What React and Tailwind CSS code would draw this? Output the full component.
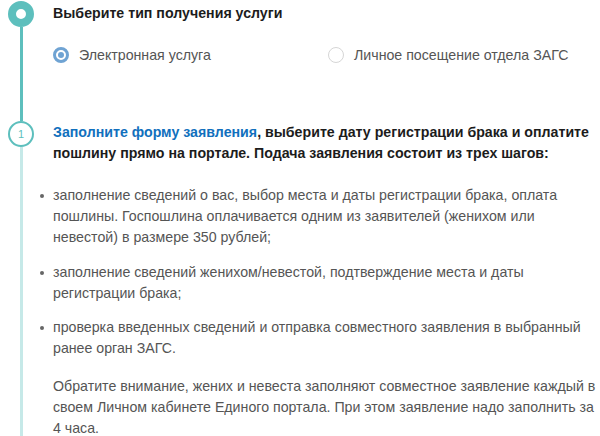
import React from 'react';

const items = [
    'заполнение сведений о вас, выбор места и даты регистрации брака, оплата пошлины. Госпошлина оплачивается одним из заявителей (женихом или невестой) в размере 350 рублей;',
    'заполнение сведений женихом/невестой, подтверждение места и даты регистрации брака;',
    'проверка введенных сведений и отправка совместного заявления в выбранный ранее орган ЗАГС.',
];

const Radio = ({ checked, label }) => (
    <label className="flex items-center gap-[10px] leading-[20px] text-[14.2px] text-[#555]">
        {checked ? (
            <span className="w-[16px] h-[16px] rounded-full border-[3px] border-[#6fa3d3] flex items-center justify-center">
                <span className="w-[6px] h-[6px] rounded-full bg-[#6fa3d3]" />
            </span>
        ) : (
            <span className="w-[16px] h-[16px] rounded-full border border-[#d6d6d6] bg-white" />
        )}
        {label}
    </label>
);

export default function App() {
    return (
        <div className="w-[600px] h-[436px] overflow-hidden bg-white" style={{ fontFamily: '"Liberation Sans", Arial, sans-serif' }}>
            {/* Step: type of service */}
            <div className="flex">
                <div className="w-[42px] flex flex-col items-center pt-[1px]">
                    <div className="w-[26px] h-[26px] rounded-full border-[8px] border-[#5dbfbd] shrink-0" />
                    <div className="flex-1 w-[3px] bg-[#5dbfbd]" />
                </div>
                <div className="flex-1 pl-[11px] pb-[56px]">
                    <h2 className="text-[14.2px] leading-[26px] font-bold text-[#1c1c1c]">
                        Выберите тип получения услуги
                    </h2>
                    <div className="mt-[19px] flex">
                        <div className="w-[275px]">
                            <Radio checked label="Электронная услуга" />
                        </div>
                        <Radio label="Личное посещение отдела ЗАГС" />
                    </div>
                </div>
            </div>

            {/* Step 1 */}
            <div className="flex">
                <div className="w-[42px] flex flex-col items-center">
                    <div className="w-[26px] h-[26px] rounded-full border-2 border-[#5dbfbd] flex items-center justify-center text-[11px] text-[#5dbfbd] shrink-0">
                        1
                    </div>
                    <div className="flex-1 w-[3px] bg-[#c6e9e8]" />
                </div>
                <div className="flex-1 pl-[11px] pr-[4px] pt-[1px] pb-[20px]">
                    <p className="text-[14.2px] leading-[21px] font-bold text-[#1c1c1c]">
                        <span className="text-[#1170bd]">Заполните форму заявления</span>, выберите дату регистрации брака и оплатите пошлину прямо на портале. Подача заявления состоит из трех шагов:
                    </p>
                    <ul className="mt-[21px] -ml-[16px] text-[14.2px] leading-[21px] text-[#555]">
                        {items.map((t, i) => (
                            <li key={i} className={i === 0 ? 'flex' : i === 1 ? 'flex mt-[14px]' : 'flex mt-[13px]'}>
                                <span className="w-[16px] h-[21px] shrink-0 flex items-center pl-[3px]">
                                    <span className="w-[4px] h-[4px] rounded-full bg-[#666]" />
                                </span>
                                <span>{t}</span>
                            </li>
                        ))}
                    </ul>
                    <p className="mt-[17px] text-[14.2px] leading-[21px] text-[#555]">
                        Обратите внимание, жених и невеста заполняют совместное заявление каждый в своем Личном кабинете Единого портала. При этом заявление надо заполнить за 4 часа.
                    </p>
                </div>
            </div>
        </div>
    );
}
